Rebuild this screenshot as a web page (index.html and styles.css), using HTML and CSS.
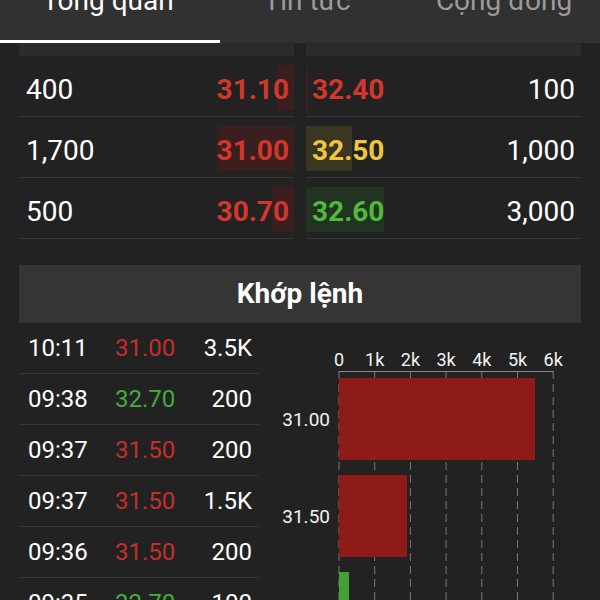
FILE: index.html
```html
<!DOCTYPE html>
<html lang="vi">
<head>
    <meta charset="UTF-8">
    <meta name="viewport" content="width=device-width, initial-scale=1.0">
    <title>Tổng quan</title>
    <link rel="stylesheet" href="styles.css">
</head>
<body>
    <!-- Tabs -->
    <div class="tabs">
        <div class="tab tab-first active"><span>Tổng quan</span></div>
        <div class="tab tab-second"><span>Tin tức</span></div>
        <div class="tab tab-third"><span>Cộng đồng</span></div>
    </div>

    <!-- Bước giá -->
    <div class="book">
        <div class="side">
            <div class="side-head"></div>
            <div class="book-row">
                <span class="qty">400</span>
                <span class="price bid red" style="--w: 17px">31.10</span>
            </div>
            <div class="book-row">
                <span class="qty">1,700</span>
                <span class="price bid red" style="--w: 78px">31.00</span>
            </div>
            <div class="book-row">
                <span class="qty">500</span>
                <span class="price bid red" style="--w: 22px">30.70</span>
            </div>
        </div>
        <div class="side">
            <div class="side-head"></div>
            <div class="book-row">
                <span class="price ask red" style="--w: 2px">32.40</span>
                <span class="qty">100</span>
            </div>
            <div class="book-row">
                <span class="price ask yellow" style="--w: 46px">32.50</span>
                <span class="qty">1,000</span>
            </div>
            <div class="book-row">
                <span class="price ask green" style="--w: 137px">32.60</span>
                <span class="qty">3,000</span>
            </div>
        </div>
    </div>

    <!-- Khớp lệnh -->
    <div class="section-title">Khớp lệnh</div>

    <div class="match">
        <div class="trades">
            <div class="trade"><span class="time">10:11</span><span class="tprice red">31.00</span><span class="vol">3.5K</span></div>
            <div class="trade"><span class="time">09:38</span><span class="tprice green">32.70</span><span class="vol">200</span></div>
            <div class="trade"><span class="time">09:37</span><span class="tprice red">31.50</span><span class="vol">200</span></div>
            <div class="trade"><span class="time">09:37</span><span class="tprice red">31.50</span><span class="vol">1.5K</span></div>
            <div class="trade"><span class="time">09:36</span><span class="tprice red">31.50</span><span class="vol">200</span></div>
            <div class="trade"><span class="time">09:35</span><span class="tprice green">32.70</span><span class="vol">100</span></div>
        </div>

        <svg class="chart" width="322" height="278" viewBox="0 0 322 278">
            <g class="xlabels">
                <text x="80" y="43">0</text>
                <text x="115.7" y="43">1k</text>
                <text x="151.4" y="43">2k</text>
                <text x="187.1" y="43">3k</text>
                <text x="222.8" y="43">4k</text>
                <text x="258.5" y="43">5k</text>
                <text x="294.2" y="43">6k</text>
            </g>
            <g class="grid">
                <line x1="80" y1="48" x2="80" y2="278"/>
                <line x1="115.7" y1="48" x2="115.7" y2="278"/>
                <line x1="151.4" y1="48" x2="151.4" y2="278"/>
                <line x1="187.1" y1="48" x2="187.1" y2="278"/>
                <line x1="222.8" y1="48" x2="222.8" y2="278"/>
                <line x1="258.5" y1="48" x2="258.5" y2="278"/>
                <line x1="294.2" y1="48" x2="294.2" y2="278"/>
            </g>
            <line class="axis" x1="80" y1="48.5" x2="294.2" y2="48.5"/>
            <rect class="bar-red" x="80" y="55" width="196" height="82"/>
            <rect class="bar-red" x="80" y="152" width="68" height="82"/>
            <rect class="bar-green" x="80" y="249" width="10" height="82"/>
            <g class="ylabels">
                <text x="71" y="103">31.00</text>
                <text x="71" y="200">31.50</text>
            </g>
        </svg>
    </div>
</body>
</html>
```

FILE: styles.css
```css
body {
    margin: 0;
    height: 600px;
    overflow: hidden;
    background-color: #222;
    color: #fff;
    font-family: Roboto, "Noto Sans", sans-serif;
}

/* Tabs */
.tabs {
    display: flex;
    height: 43px;
    background-color: #313131;
    overflow: hidden;
}

.tab {
    flex: none;
    box-sizing: border-box;
    text-align: center;
    font-size: 28px;
    line-height: 28px;
    color: #9b9b9b;
}

.tab span {
    display: block;
    margin-top: -13px;
}

.tab-first {
    width: 220px;
    padding-right: 4px;
}

.tab-second {
    width: 174px;
}

.tab-third {
    width: 220px;
}

.tab.active {
    color: #fff;
    border-bottom: 3px solid #fff;
    height: 43px;
}

/* Order book */
.book {
    display: flex;
    gap: 12px;
    padding: 0 19px;
}

.side {
    flex: 1;
}

.side-head {
    height: 13px;
    background-color: #2b2b2b;
}

.book-row {
    display: flex;
    justify-content: space-between;
    box-sizing: border-box;
    height: 61px;
    padding-top: 3px;
    border-bottom: 1px solid #363636;
    font-size: 28px;
}

.qty {
    display: flex;
    align-items: center;
    padding: 3px 6px 0 7px;
}

.price {
    display: flex;
    align-items: center;
    padding-top: 3px;
    font-weight: bold;
    background-repeat: no-repeat;
    background-size: var(--w) 45px;
}

.bid {
    padding-right: 5px;
    background-position: right 0 top 6px;
}

.ask {
    padding-left: 6px;
    background-position: left 0 top 6px;
}

.price.red {
    color: #d3362d;
    background-image: linear-gradient(#3b1f1e, #3b1f1e);
}

.price.yellow {
    color: #f0c63e;
    background-image: linear-gradient(#3b3622, #3b3622);
}

.price.green {
    color: #4fbb3b;
    background-image: linear-gradient(#223321, #223321);
}

/* Khớp lệnh */
.section-title {
    margin: 26px 19px 0;
    height: 58px;
    line-height: 58px;
    background-color: #353535;
    text-align: center;
    font-size: 28px;
    font-weight: bold;
}

.match {
    display: flex;
    padding-left: 19px;
}

.trades {
    width: 240px;
    flex: none;
}

.trade {
    display: flex;
    align-items: center;
    height: 50px;
    border-bottom: 1px solid #363636;
    font-size: 24px;
}

.time {
    width: 87px;
    padding-left: 9px;
}

.tprice {
    flex: 1;
}

.tprice.red {
    color: #c2302b;
}

.tprice.green {
    color: #46ac3b;
}

.vol {
    padding-right: 7px;
}

/* Chart */
.chart {
    flex: none;
    display: block;
}

.chart text {
    fill: #f2f2f2;
    font-family: Roboto, sans-serif;
}

.xlabels text {
    font-size: 18px;
    text-anchor: middle;
}

.ylabels text {
    font-size: 19px;
    text-anchor: end;
}

.grid line {
    stroke: #7a7a7a;
    stroke-width: 1;
    stroke-dasharray: 8 5;
}

.axis {
    stroke: #8a8a8a;
    stroke-width: 1;
}

.bar-red {
    fill: #8e1b17;
}

.bar-green {
    fill: #43a136;
}
```
